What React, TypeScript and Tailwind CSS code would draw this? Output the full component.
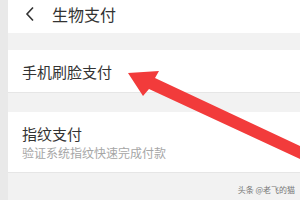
export default function App() {
  return (
    <div
      className="relative flex h-[200px] w-[300px] overflow-hidden bg-[#f2f2f2]"
      style={{ fontFamily: '"Noto Sans CJK SC", "Noto Sans", sans-serif' }}
    >
      {/* Left edge strip */}
      <div className="w-[8px] shrink-0 bg-[#e9e9e9]" />

      <div className="flex flex-1 flex-col">
        {/* Header */}
        <div className="flex h-[33px] items-center bg-white pl-[17px]">
          <svg width="10" height="16" viewBox="0 0 10 16" className="mt-[-5px]">
            <path d="M8 1.5 L2 8 L8 14.5" fill="none" stroke="#333" strokeWidth="1.6" />
          </svg>
          <span className="ml-[17px] mt-[-5px] text-[16px] leading-none text-[#333]">生物支付</span>
        </div>

        {/* Face pay */}
        <div className="mt-[17px] flex h-[43px] items-center border-b border-[#e6e6e6] bg-white pl-[14px]">
          <span className="text-[15px] leading-none text-[#333]">手机刷脸支付</span>
        </div>

        {/* Fingerprint pay */}
        <div className="mt-[19px] flex h-[61px] flex-col justify-center border-b border-[#e6e6e6] bg-white pl-[14px]">
          <span className="text-[15px] leading-none text-[#333]">指纹支付</span>
          <span className="mt-[6px] text-[12px] leading-none text-[#a6a6a6]">验证系统指纹快速完成付款</span>
        </div>

        <div className="flex flex-1 items-end justify-end pb-[6px] pr-[5px]">
          <span className="text-[8px] leading-none text-[#777]">头条 @老飞的猫</span>
        </div>
      </div>

      {/* Red arrow annotation */}
      <svg className="pointer-events-none absolute left-0 top-0" width="300" height="200" viewBox="0 0 300 200">
        <polygon
          points="128,73 159,71 155,78 300,146 300,159 149,89 143,96"
          fill="#f23b3b"
        />
      </svg>
    </div>
  );
}
